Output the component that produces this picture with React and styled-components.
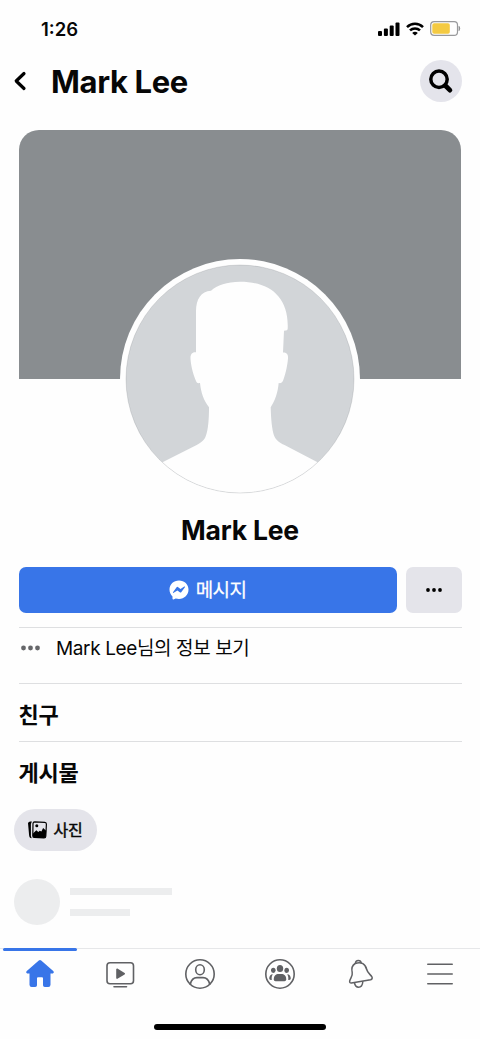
import React from "react";
import styled, { createGlobalStyle } from "styled-components";

const GlobalStyle = createGlobalStyle`
  * { box-sizing: border-box; }
  body {
    margin: 0;
    background: #fefefe;
    color: #070707;
    font-family: Inter, "Noto Sans CJK KR", sans-serif;
  }
  button { border: 0; padding: 0; background: none; color: inherit; font: inherit; }
  svg { display: block; flex: none; }
`;

const Screen = styled.div`
  width: 480px;
  height: 1039px;
  display: flex;
  flex-direction: column;
  background: #fefefe;
  overflow: hidden;
`;

const StatusBar = styled.div`
  height: 57px;
  padding: 0 19px 0 41px;
  display: flex;
  align-items: center;
  justify-content: space-between;
`;

const Clock = styled.span`
  font-size: 18.5px;
  font-weight: 600;
  letter-spacing: 0;
  line-height: 24px;
`;

const StatusIcons = styled.div`
  display: flex;
  align-items: center;
  gap: 6px;
`;

const Header = styled.header`
  height: 48px;
  padding: 0 18.5px 0 13px;
  display: flex;
  align-items: center;
`;

const BackButton = styled.button`
  width: 38px;
  height: 40px;
  display: flex;
  align-items: center;
`;

const HeaderTitle = styled.h1`
  margin: 0;
  flex: 1;
  padding-top: 2px;
  font-size: 31px;
  font-weight: 700;
  line-height: 40px;
  letter-spacing: -0.35px;
`;

const SearchButton = styled.button`
  width: 42px;
  height: 42px;
  border-radius: 50%;
  background: #e4e4eb;
  display: flex;
  align-items: center;
  justify-content: center;
`;

const Cover = styled.div`
  height: 249px;
  flex: none;
  margin: 25px 19px 0;
  border-radius: 20px 20px 0 0;
  background: #898d90;
`;

const Avatar = styled.div`
  position: relative;
  width: 240px;
  height: 240px;
  flex: none;
  margin: -120px auto 0;
  border-radius: 50%;
  background: #fefefe;
  display: flex;
  align-items: center;
  justify-content: center;
`;

const ProfileName = styled.h2`
  margin: 11px 0 0;
  font-size: 26.5px;
  font-weight: 700;
  line-height: 40px;
  letter-spacing: -0.2px;
  text-align: center;
`;

const Actions = styled.div`
  display: flex;
  gap: 9px;
  padding: 0 18.5px;
  margin-top: 16.5px;
`;

const ActionButton = styled.button`
  height: 46px;
  border-radius: 7px;
  display: flex;
  align-items: center;
  justify-content: center;
  gap: 7px;
  font-size: 19px;
  font-weight: 400;
  letter-spacing: -0.6px;
  -webkit-text-stroke: 0.25px currentColor;
  flex: ${(p) => (p.$primary ? "1" : "0 0 56px")};
  background: ${(p) => (p.$primary ? "#3875e8" : "#e4e4ea")};
  color: ${(p) => (p.$primary ? "#fff" : "#070707")};
`;

const ButtonLabel = styled.span`
  margin-bottom: 2px;
`;

const Divider = styled.hr`
  width: 443px;
  height: 1px;
  flex: none;
  border: 0;
  margin: ${(p) => p.$top || 0}px auto 0;
  background: #dedfe1;
`;

const InfoRow = styled.div`
  height: 55.5px;
  flex: none;
  padding: 6.5px 20px 0;
  display: flex;
  align-items: flex-start;
  gap: 15px;
  font-size: 19px;
  line-height: 30px;
  letter-spacing: -0.38px;
  svg { margin-top: 11px; }
`;

const SectionTitle = styled.h3`
  margin: 0;
  padding: 0 18.5px;
  height: 57px;
  font-size: 22px;
  font-weight: 700;
  line-height: 62px;
  letter-spacing: -0.3px;
`;

const Chip = styled.button`
  width: 83px;
  height: 42px;
  flex: none;
  margin: 10px 0 0 14px;
  padding-left: 14px;
  border-radius: 21px;
  background: #e4e4ea;
  display: flex;
  align-items: center;
  gap: 5.5px;
  font-size: 16px;
  font-weight: 400;
  letter-spacing: -0.3px;
  -webkit-text-stroke: 0.45px currentColor;
`;

const Placeholder = styled.div`
  display: flex;
  gap: 9.5px;
  margin: 28px 0 0 14px;
`;

const PlaceholderCircle = styled.div`
  width: 46px;
  height: 46px;
  border-radius: 50%;
  background: #ecedee;
`;

const PlaceholderLines = styled.div`
  display: flex;
  flex-direction: column;
  gap: 14px;
  padding-top: 9px;
`;

const PlaceholderLine = styled.div`
  width: ${(p) => p.$width}px;
  height: 7px;
  background: #ecedee;
`;

const TabBar = styled.nav`
  margin-top: auto;
  height: 91px;
  flex: none;
  border-top: 1px solid #e6e7e9;
  display: flex;
  flex-direction: column;
  align-items: center;
  justify-content: space-between;
`;

const Tabs = styled.div`
  width: 480px;
  display: flex;
`;

const Tab = styled.div`
  flex: 1;
  height: 50px;
  display: flex;
  flex-direction: column;
  align-items: center;
  gap: 6px;
  &::before {
    content: "";
    width: 74px;
    height: 3px;
    margin-top: -1px;
    border-radius: 2px;
    background: ${(p) => (p.$active ? "#3875e8" : "transparent")};
  }
`;

const HomeIndicator = styled.div`
  width: 172px;
  height: 6px;
  margin-bottom: 9px;
  border-radius: 3px;
  background: #000;
`;

const Signal = () => (
  <svg width="23" height="14" viewBox="0 0 23 14">
    <rect x="1" y="9" width="4" height="5" rx="1" />
    <rect x="6.9" y="6.5" width="4" height="7.500" rx="1" />
    <rect x="12.700" y="3.500" width="4" height="10.500" rx="1" />
    <rect x="18.500" y="0.500" width="4" height="13.500" rx="1" />
  </svg>
);

const Wifi = () => (
  <svg width="18" height="14" viewBox="0 0 18 14" fill="none" stroke="#000" strokeWidth="2.5">
    <path d="M1 5.1C5.5.6 12.5.6 17 5.1" />
    <path d="M4 8.4c2.8-2.7 7.2-2.7 10 0" />
    <path d="M9 13.5 6.2 10.9c1.6-1.4 4-1.4 5.6 0Z" fill="#000" stroke="none" />
  </svg>
);

const Battery = () => (
  <svg width="31" height="15" viewBox="0 0 31 15">
    <rect x="0.7" y="0.7" width="26.8" height="13.6" rx="3.4" fill="none" stroke="#98999b" strokeWidth="1.2" />
    <rect x="2.3" y="2.3" width="17.5" height="10.4" rx="1.8" fill="#f4ca42" />
    <path d="M29 5.3q1.5 2.2 0 4.4Z" fill="#77787a" stroke="#77787a" strokeWidth="0.6" />
  </svg>
);

const Chevron = () => (
  <svg width="14" height="20" viewBox="0 0 14 20" fill="none" stroke="#000" strokeWidth="3.2" strokeLinecap="round" strokeLinejoin="round">
    <path d="M11 2.5 3.2 10l7.8 7.5" />
  </svg>
);

const Search = () => (
  <svg width="26" height="26" viewBox="0 0 26 26" fill="none" stroke="#000" strokeLinecap="round">
    <circle cx="11" cy="11.2" r="8.2" strokeWidth="3.5" />
    <path d="m17.500 17.700 4.400 4.400" strokeWidth="4.800" />
  </svg>
);

const Person = () => (
  <svg width="230" height="230" viewBox="-1 -1 230 230">
    <defs>
      <clipPath id="avatar-circle"><circle cx="114" cy="114" r="114" /></clipPath>
    </defs>
    <g clipPath="url(#avatar-circle)">
      <rect width="228" height="228" fill="#d2d5d8" />
      <path
        fill="#fefefe"
        d="M114 16.7c-13 0-23 3.5-29 9C75 26.500 70 34 70 46V87.200c-4-.5-5.700 2-5.500 6.500.5 9 3.500 17.500 5.500 22.300.7 1.800 1.700 2.500 4 2.100 1 9.500 3.500 17 9 24.200 0 12-.8 22.500-3.300 29-1.500 4-4 6-9 8.700L36 197.500V232h156v-34.500l-33.500-17.400c-5-2.600-8.500-4.600-10.500-9.600-2-6-3-16-3.300-28.200 4.700-7 7-14.500 8-24.200 2.300.3 3.400-.3 4.300-2.300 2-5 4.300-14 5-22.300.3-4-1-6-5-6l1-21.700c2.700-.2 3.700-.7 3.700-2.300C163 31 143 16.700 114 16.700Z"
      />
    </g>
    <circle cx="114" cy="114" r="114" fill="none" stroke="#6f7479" strokeOpacity="0.25" strokeWidth="0.8" />
  </svg>
);

const Messenger = () => (
  <svg width="20" height="20" viewBox="0 0 20 20">
    <path fill="#fff" d="M10 .4C4.600.4.500 4.300.500 9.500c0 2.800 1.100 5.200 3 6.900v2.400c0 .6.500.9 1 .7l2.200-1.100c1 .3 2.200.5 3.300.5 5.400 0 9.500-4.200 9.500-9.400S15.400.4 10 .4Z" />
    <path d="M4 12.300 7.600 7.300q.7-.8 1.600-.1l2.300 1.700 3.800-2.300q1-.4.6.6l-3.500 4.900q-.7.900-1.600.2L8.400 10.600l-3.700 2.200q-1 .4-.7-.5Z" fill="#3875e8" />
  </svg>
);

const Dots = ({ width, r, gap, color }) => (
  <svg width={width} height="6" viewBox={`${-width / 2} -3 ${width} 6`} fill={color}>
    <circle cx={-gap} r={r} />
    <circle r={r} />
    <circle cx={gap} r={r} />
  </svg>
);

const Photos = () => (
  <svg width="20" height="18" viewBox="0 0 20 18">
    <path d="M0 2C.9.7 2.400.5 3.900.6L2.900 3v12l.8 2.200C2 17 1.300 16.200 1.100 14.200Z" />
    <path d="M6.700.9 16.700 1.400q1.800.1 1.700 1.900L17.800 15.200q-.1 1.800-1.900 1.700L6.200 16.400q-1.500-.1-1.400-1.700L5 2.600q.1-1.700 1.700-1.700Z" fill="none" stroke="#000" strokeWidth="1.2" />
    <path d="m5 12.500 3.300-3.200 2 1.700 1.500-1.300 1.600.900 1.700-3.500 3.100 2.700-.4 5.400q-.1 1.800-1.900 1.700L6.200 16.400q-1.400-.2-1.400-1.700Z" />
    <circle cx="8.800" cy="4.800" r="1.500" />
  </svg>
);

const NavIcon = ({ children, ...rest }) => (
  <svg width="34" height="34" viewBox="-17 -17 34 34" fill="none" stroke="#606164" strokeWidth="1.6" strokeLinecap="round" strokeLinejoin="round" {...rest}>
    {children}
  </svg>
);

const Home = () => (
  <NavIcon fill="#3875e8" stroke="none">
    <path d="M-1.200-13.600q1.200-1 2.400 0L13.500-2.700q1 1.400-.6 2.200H10.500V10.800q0 2.200-2.200 2.200H4.800q-1.800 0-1.800-1.800V4.200q0-1-1-1h-4q-1 0-1 1v7q0 1.800-1.800 1.800h-3.500q-2.200 0-2.200-2.200V-.500h-2.400q-1.600-.8-.6-2.200Z" />
  </NavIcon>
);

const Watch = () => (
  <NavIcon>
    <rect x="-13" y="-11.200" width="26.500" height="21" rx="3" />
    <path d="M-3-4.700v8.800l7.200-4.400Z" fill="#606164" />
    <path d="M-6 12.800H6.500" />
  </NavIcon>
);

const Profile = () => (
  <NavIcon>
    <circle r="14.200" />
    <ellipse cy="-4.200" rx="4.300" ry="5" />
    <path d="M-9.700 10.200C-8.700 5.800-6 3.600-3 3.600H3C6 3.600 8.700 5.800 9.700 10.200" />
  </NavIcon>
);

const Groups = () => (
  <NavIcon>
    <circle r="14.200" />
    <g fill="#606164" stroke="none">
      <ellipse cy="-5.500" rx="3.200" ry="3.600" />
      <ellipse cx="-6.700" cy="-3.700" rx="2.300" ry="2.600" />
      <ellipse cx="6.700" cy="-3.700" rx="2.300" ry="2.600" />
      <path d="M-6.200 5.500C-6.200 1.500-4 .1-1.500.1h3C4 .1 6.200 1.500 6.200 5.500q0 1.700-1.700 1.700h-9q-1.700 0-1.700-1.700Z" />
      <path d="M-7.200.2C-8.500 2-8.400 4-8.200 6.100q-2.500.1-2.600-1.500C-10.800 2-9.500.3-7.200.2ZM7.200.2C8.500 2 8.400 4 8.200 6.100q2.500.1 2.600-1.500C10.800 2 9.500.3 7.200.2Z" />
    </g>
  </NavIcon>
);

const Bell = () => (
  <NavIcon strokeWidth="1.500">
    <path d="M-4.800-10.500C-8-8.500-8.800-5.500-7.800-1.500-7 1.500-9.700 4.400-10.300 7q-.4 2.200 1.700 2.100L10.600 5.700q2.300-.6 1.300-2.900C10.600.8 7.500-1.300 6.800-4.200 5.800-9.700 1.200-12.900-4.800-10.500Z" />
    <path d="M-4.500-10.700C-4.500-13-2.800-13.600-1.700-13.600S1-12.800 1.100-11.200M-5.500 9c.5 2.700 2.100 4.200 4 4.200 2.300 0 4-1.900 4.300-5.500" />
  </NavIcon>
);

const Menu = () => (
  <NavIcon>
    <path d="M-12.200-9.700h24.400M-12.200 0h24.400M-12.200 9.800h24.400" />
  </NavIcon>
);

export default function App() {
  return (
    <Screen>
      <GlobalStyle />
      <StatusBar>
        <Clock>1:26</Clock>
        <StatusIcons>
          <Signal />
          <Wifi />
          <Battery />
        </StatusIcons>
      </StatusBar>
      <Header>
        <BackButton aria-label="뒤로"><Chevron /></BackButton>
        <HeaderTitle>Mark Lee</HeaderTitle>
        <SearchButton aria-label="검색"><Search /></SearchButton>
      </Header>
      <Cover />
      <Avatar><Person /></Avatar>
      <ProfileName>Mark Lee</ProfileName>
      <Actions>
        <ActionButton $primary><Messenger /><ButtonLabel>메시지</ButtonLabel></ActionButton>
        <ActionButton aria-label="더 보기"><Dots width={20} r={1.9} gap={6} color="#000" /></ActionButton>
      </Actions>
      <Divider $top={14} />
      <InfoRow>
        <Dots width={21} r={2.4} gap={7} color="#66676a" />
        Mark Lee님의 정보 보기
      </InfoRow>
      <Divider />
      <SectionTitle>친구</SectionTitle>
      <Divider />
      <SectionTitle>게시물</SectionTitle>
      <Chip><Photos /><ButtonLabel>사진</ButtonLabel></Chip>
      <Placeholder>
        <PlaceholderCircle />
        <PlaceholderLines>
          <PlaceholderLine $width={102} />
          <PlaceholderLine $width={60} />
        </PlaceholderLines>
      </Placeholder>
      <TabBar>
        <Tabs>
          <Tab $active><Home /></Tab>
          <Tab><Watch /></Tab>
          <Tab><Profile /></Tab>
          <Tab><Groups /></Tab>
          <Tab><Bell /></Tab>
          <Tab><Menu /></Tab>
        </Tabs>
        <HomeIndicator />
      </TabBar>
    </Screen>
  );
}
